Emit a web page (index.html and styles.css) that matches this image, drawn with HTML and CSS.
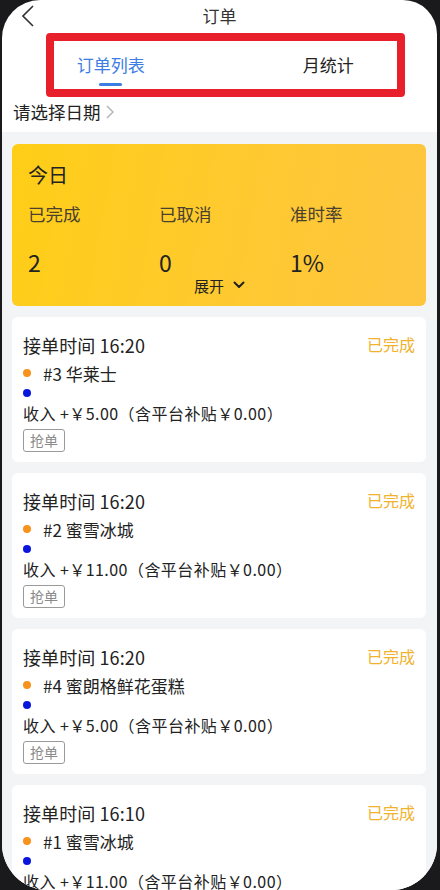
FILE: index.html
```html
<!DOCTYPE html>
<html lang="zh-CN">
<head>
    <meta charset="UTF-8">
    <meta name="viewport" content="width=device-width, initial-scale=1.0">
    <title>订单</title>
    <link rel="stylesheet" href="styles.css">
</head>
<body>
    <div class="screen">
        <!-- Header -->
        <header class="nav">
            <span class="back">
                <svg width="12" height="22" viewBox="0 0 12 22"><polyline points="11,1 1,11 11,21" fill="none" stroke="#333" stroke-width="1.6"/></svg>
            </span>
            <h1 class="nav-title">订单</h1>
            <span></span>
        </header>

        <!-- Tabs -->
        <div class="tabs">
            <div class="tab active">订单列表<i class="tab-line"></i></div>
            <div class="tab">月统计</div>
            <div class="mark"></div>
        </div>

        <div class="date-row">
            请选择日期
            <svg class="date-arrow" width="8" height="14" viewBox="0 0 8 14"><polyline points="1,1 7,7 1,13" fill="none" stroke="#b5b5b5" stroke-width="1.5"/></svg>
        </div>

        <main class="content">
            <!-- Today summary -->
            <section class="today">
                <div class="today-title">今日</div>
                <div class="stats">
                    <span class="stat-label">已完成</span>
                    <span class="stat-label">已取消</span>
                    <span class="stat-label">准时率</span>
                    <span class="stat-value">2</span>
                    <span class="stat-value">0</span>
                    <span class="stat-value">1%</span>
                </div>
                <div class="expand">
                    展开
                    <svg width="12" height="8" viewBox="0 0 12 8"><polyline points="1.5,1.5 6,6 10.5,1.5" fill="none" stroke="#222" stroke-width="2" stroke-linecap="round" stroke-linejoin="round"/></svg>
                </div>
            </section>

            <!-- Orders -->
            <section class="order-card">
                <div class="order-head">
                    <span class="order-time">接单时间 16:20</span>
                    <span class="order-status">已完成</span>
                </div>
                <div class="shop"><i class="dot dot-orange"></i>#3 华莱士</div>
                <div class="dest"><i class="dot dot-blue"></i></div>
                <div class="income">收入 +￥5.00（含平台补贴￥0.00）</div>
                <span class="tag">抢单</span>
            </section>

            <section class="order-card">
                <div class="order-head">
                    <span class="order-time">接单时间 16:20</span>
                    <span class="order-status">已完成</span>
                </div>
                <div class="shop"><i class="dot dot-orange"></i>#2 蜜雪冰城</div>
                <div class="dest"><i class="dot dot-blue"></i></div>
                <div class="income">收入 +￥11.00（含平台补贴￥0.00）</div>
                <span class="tag">抢单</span>
            </section>

            <section class="order-card">
                <div class="order-head">
                    <span class="order-time">接单时间 16:20</span>
                    <span class="order-status">已完成</span>
                </div>
                <div class="shop"><i class="dot dot-orange"></i>#4 蜜朗格鲜花蛋糕</div>
                <div class="dest"><i class="dot dot-blue"></i></div>
                <div class="income">收入 +￥5.00（含平台补贴￥0.00）</div>
                <span class="tag">抢单</span>
            </section>

            <section class="order-card">
                <div class="order-head">
                    <span class="order-time">接单时间 16:10</span>
                    <span class="order-status">已完成</span>
                </div>
                <div class="shop"><i class="dot dot-orange"></i>#1 蜜雪冰城</div>
                <div class="dest"><i class="dot dot-blue"></i></div>
                <div class="income">收入 +￥11.00（含平台补贴￥0.00）</div>
                <span class="tag">抢单</span>
            </section>
        </main>
    </div>
</body>
</html>
```

FILE: styles.css
```css
html, body {
    margin: 0;
    padding: 0;
    background-color: #1a1a1c;
}

body {
    font-family: "Noto Sans CJK SC", "Noto Sans", sans-serif;
    color: #222;
    padding: 0 3px 0 2px;
    height: 890px;
    overflow: hidden;
}

.screen {
    position: relative;
    height: 890px;
    background: #fff;
    border-radius: 38px 34px 46px 46px;
    overflow: hidden;
}

/* Header */
.nav {
    display: grid;
    grid-template-columns: 60px 1fr 60px;
    align-items: center;
    height: 32px;
}

.back {
    display: flex;
    padding-left: 20px;
}

.nav-title {
    margin: 0;
    text-align: center;
    font-size: 17px;
    font-weight: normal;
    color: #333;
    line-height: 32px;
}

/* Tabs */
.tabs {
    position: relative;
    display: flex;
    height: 59px;
    box-sizing: border-box;
    padding-top: 21px;
}

.tab {
    flex: 1;
    display: flex;
    flex-direction: column;
    align-items: center;
    font-size: 17px;
    line-height: 24px;
    color: #222;
}

.tab.active {
    color: #3b7de3;
}

.tab-line {
    width: 23px;
    height: 3px;
    margin-top: 6px;
    border-radius: 2px;
    background: #3b7de3;
}

/* red annotation box */
.mark {
    position: absolute;
    left: 44px;
    top: 1px;
    width: 359px;
    height: 64px;
    box-sizing: border-box;
    border: 8px solid #e8202b;
    border-radius: 4px;
}

.date-row {
    display: flex;
    align-items: center;
    height: 41px;
    padding-left: 11px;
    font-size: 17.5px;
    color: #222;
}

.date-arrow {
    margin-left: 5px;
}

/* Content */
.content {
    background: #f3f4f6;
    padding: 12px 11px 20px 10px;
}

.today {
    background: linear-gradient(100deg, #fece17 0%, #fec932 60%, #fec540 100%);
    border-radius: 6px;
    padding: 16px 5px 11px 16px;
    margin-bottom: 11px;
}

.today-title {
    font-size: 20px;
    line-height: 30px;
}

.stats {
    display: grid;
    grid-template-columns: repeat(3, 1fr);
    grid-template-rows: 28px 26px;
    row-gap: 21px;
    margin-top: 10px;
}

.stat-label {
    font-size: 17.5px;
    line-height: 28px;
    color: #4a4030;
}

.stat-value {
    font-size: 23px;
    line-height: 26px;
}

.expand {
    display: flex;
    justify-content: center;
    align-items: center;
    gap: 9px;
    height: 20px;
    font-size: 15px;
    padding-right: 10px;
}

.order-card {
    background: #fff;
    border-radius: 6px;
    padding: 14px 11px 11px 11px;
    margin-bottom: 11px;
    height: 120px;
}

.order-head {
    display: flex;
    justify-content: space-between;
    align-items: center;
    height: 28px;
}

.order-time {
    font-size: 18px;
    letter-spacing: 0.1px;
}

.order-status {
    font-size: 16px;
    color: #f1b22e;
    margin-top: -2px;
}

.shop {
    display: flex;
    align-items: center;
    height: 28px;
    font-size: 17px;
}

.dest {
    display: flex;
    align-items: center;
    height: 12px;
}

.dot {
    width: 8px;
    height: 8px;
    border-radius: 50%;
    margin-right: 12px;
    flex-shrink: 0;
}

.dot-orange {
    background: #f7921c;
}

.dot-blue {
    background: #0a16dc;
}

.income {
    font-size: 16px;
    line-height: 28px;
    letter-spacing: 0.45px;
}

.tag {
    display: inline-block;
    margin-top: 1px;
    height: 23px;
    line-height: 21px;
    box-sizing: border-box;
    padding: 0 6px;
    border: 1px solid #9a9a9a;
    border-radius: 3px;
    font-size: 14px;
    color: #8a8a8a;
}
```
